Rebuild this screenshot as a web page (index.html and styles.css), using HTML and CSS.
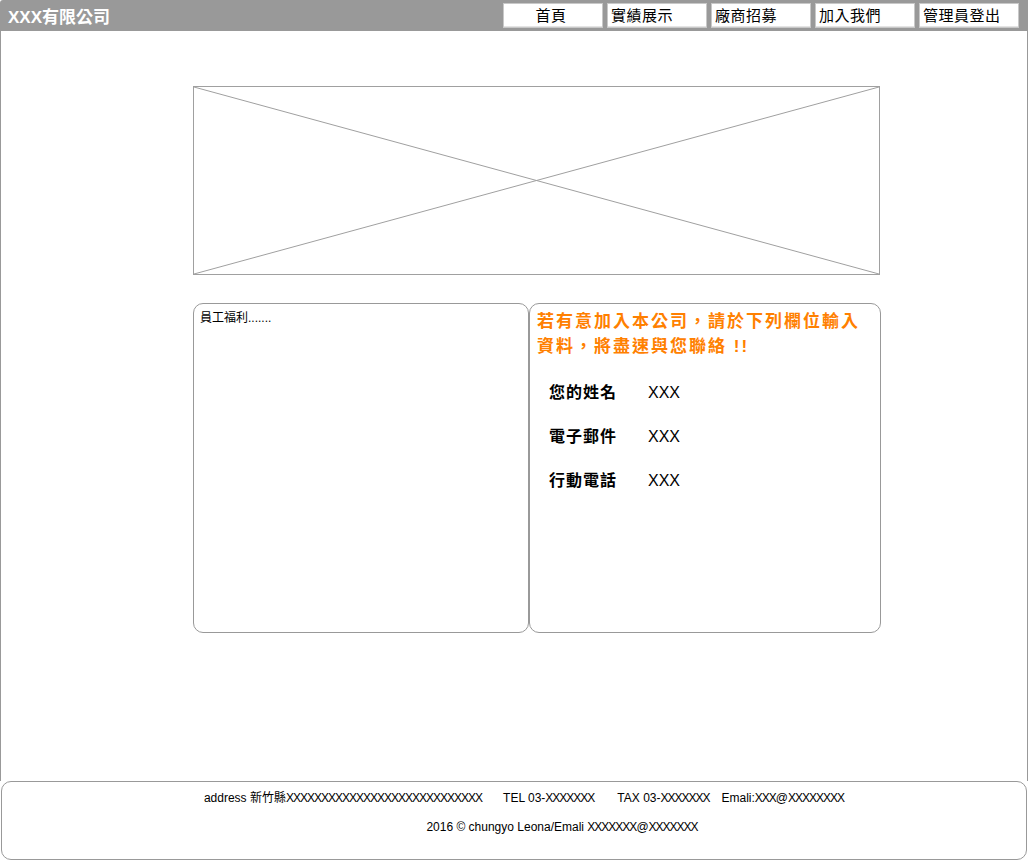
FILE: index.html
```html
<!DOCTYPE html>
<html lang="zh-Hant">
<head>
<meta charset="utf-8">
<title>XXX有限公司</title>
<link rel="stylesheet" href="styles.css">
</head>
<body>
<div class="page">
  <header class="topbar">
    <div class="brand">XXX有限公司</div>
    <nav class="nav">
      <a class="nav-item nav-home" href="#">首頁</a>
      <a class="nav-item" href="#">實績展示</a>
      <a class="nav-item" href="#">廠商招募</a>
      <a class="nav-item" href="#">加入我們</a>
      <a class="nav-item" href="#">管理員登出</a>
    </nav>
  </header>
  <main class="main">
    <div class="banner">
      <svg class="banner-x" viewBox="0 0 685 187" preserveAspectRatio="none">
        <line x1="0" y1="0" x2="685" y2="187" stroke="#a0a0a0" stroke-width="1"/>
        <line x1="685" y1="0" x2="0" y2="187" stroke="#a0a0a0" stroke-width="1"/>
      </svg>
    </div>
    <div class="panels">
      <section class="panel panel-left">
        <p class="benefits">員工福利.......</p>
      </section>
      <section class="panel panel-right">
        <h2 class="join-title">若有意加入本公司，請於下列欄位輸入資料，將盡速與您聯絡 !!</h2>
        <div class="form">
          <span class="f-label">您的姓名</span><span class="f-value">XXX</span>
          <span class="f-label">電子郵件</span><span class="f-value">XXX</span>
          <span class="f-label">行動電話</span><span class="f-value">XXX</span>
        </div>
      </section>
    </div>
  </main>
  <footer class="footer">
    <p class="foot-line foot-line1"><span>address 新竹縣<span class="xs">XXXXXXXXXXXXXXXXXXXXXXXXXXXX</span></span><span class="gap-a">TEL 03-<span class="xs">XXXXXXX</span></span><span class="gap-b">TAX 03-<span class="xs">XXXXXXX</span></span><span class="gap-c">Emali:<span class="xs">XXX</span>@<span class="xs">XXXXXXXX</span></span></p>
    <p class="foot-line foot-line2">2016 © chungyo Leona/Emali <span class="xs">XXXXXXX</span>@<span class="xs">XXXXXXX</span></p>
  </footer>
</div>
</body>
</html>
```
FILE: styles.css
```css
* { box-sizing: border-box; }
html, body { margin: 0; padding: 0; background: #fff; }
body {
  font-family: "Liberation Sans", "Noto Sans CJK TC", sans-serif;
  color: #000;
}
.page {
  width: 1028px;
  height: 861px;
  display: flex;
  flex-direction: column;
}
.topbar {
  height: 31px;
  background: #999999;
  display: flex;
  align-items: flex-start;
  justify-content: space-between;
  border-top-left-radius: 3px;
}
.brand {
  color: #fff;
  font-weight: bold;
  font-size: 17px;
  line-height: 20px;
  padding: 8px 0 0 8px;
}
.nav {
  display: flex;
  gap: 4px;
  padding: 3px 9px 0 0;
}
.nav-item {
  width: 100px;
  height: 25px;
  background: #fff;
  border: 1px solid #c8c8c8;
  box-shadow: inset 0 -1px 0 #e4e4e4;
  color: #000;
  text-decoration: none;
  font-size: 15px;
  line-height: 23px;
  letter-spacing: 0.5px;
  padding-left: 3px;
}
.nav-home { text-align: center; padding-left: 0; padding-right: 4px; }
.main {
  flex: 1;
  border-left: 1px solid #999;
  border-right: 1px solid #999;
  padding: 55px 0 0 192px;
}
.banner {
  width: 687px;
  height: 189px;
  border: 1px solid #a0a0a0;
}
.banner-x {
  display: block;
  width: 100%;
  height: 100%;
}
.panels {
  display: flex;
  margin-top: 28px;
}
.panel {
  height: 330px;
  border: 1px solid #999;
  border-radius: 10px;
}
.panel-left { width: 336px; padding: 7px 6px; }
.panel-right { width: 352px; padding: 5px 12px 0 7px; }
.benefits {
  margin: 0;
  font-size: 12px;
  line-height: 15px;
}
.join-title {
  margin: 0;
  color: #ff8000;
  font-size: 17px;
  font-weight: bold;
  line-height: 25px;
  letter-spacing: 2px;
}
.form {
  display: grid;
  grid-template-columns: 99px auto;
  grid-auto-rows: 44px;
  align-items: center;
  margin: 10px 0 0 12px;
  font-size: 16px;
}
.f-label { font-weight: bold; letter-spacing: 1px; }
.f-value { padding-top: 3px; }
.footer {
  height: 79px;
  border: 1px solid #999;
  border-radius: 10px;
  margin: 0 1px 1px 1px;
  padding-top: 9px;
  font-size: 12px;
  line-height: 15px;
}
.foot-line { margin: 0; text-align: center; white-space: pre; }
.foot-line1 { padding-left: 20px; }
.foot-line2 { margin-top: 14px; padding-left: 96px; }
.xs { letter-spacing: -1px; }
.gap-a { margin-left: 21px; }
.gap-b { margin-left: 23px; }
.gap-c { margin-left: 12px; }
```
